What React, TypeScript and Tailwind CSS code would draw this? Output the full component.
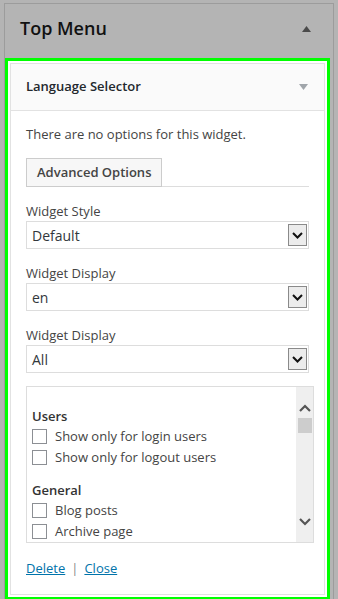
import type { ReactNode } from "react";

function SelectBox({ value }: { value: string }) {
  return (
    <div className="flex h-[28px] items-center justify-between border border-[#dddddd] bg-white pl-[5px] pr-[1px] text-[14px] text-[#32373c]">
      <span>{value}</span>
      <span className="grid h-[22px] w-[19px] place-items-center border border-[#8a8a8a] bg-[#ececec]">
        <svg width="11" height="7" viewBox="0 0 11 7">
          <path d="M1 1l4.5 4.5L10 1" fill="none" stroke="#111" strokeWidth="2" />
        </svg>
      </span>
    </div>
  );
}

function Field({ label, value }: { label: string; value: string }) {
  return (
    <div className="mt-[14px]">
      <p className="text-[13px] leading-[20px] text-[#444]">{label}</p>
      <SelectBox value={value} />
    </div>
  );
}

function Check({ children }: { children: ReactNode }) {
  return (
    <label className="flex h-[21px] items-center gap-[8px] text-[13px] text-[#444]">
      <span className="h-[15px] w-[15px] shrink-0 border border-[#8c8f94] bg-white" />
      {children}
    </label>
  );
}

function Chevron({ up }: { up?: boolean }) {
  return (
    <svg width="12" height="8" viewBox="0 0 12 8">
      <path
        d={up ? "M1 7l5-5 5 5" : "M1 1l5 5 5-5"}
        fill="none"
        stroke="#555"
        strokeWidth="2.2"
      />
    </svg>
  );
}

export default function App() {
  return (
    <div
      className="min-h-[599px] w-[338px] bg-[#b4b4b4] pt-[3px]"
      style={{ fontFamily: '"Open Sans", sans-serif' }}
    >
      <div className="ml-[4px] w-[330px] border-l border-r border-t border-[#9c9c9c]">
        <div className="flex h-[54px] items-center justify-between pb-[5px] pl-[15px] pr-[22px]">
          <h2 className="text-[18px] font-semibold text-[#111]">Top Menu</h2>
          <svg width="9" height="6" viewBox="0 0 9 6">
            <path d="M0 6L4.5 0 9 6z" fill="#4a4a4a" />
          </svg>
        </div>

        <div className="w-[325px] border-[3px] border-[#00ff00] bg-white p-[2px]">
          <div className="border border-[#e2e2e2]">
            <div className="flex h-[47px] items-center justify-between border-b border-[#e2e2e2] bg-[#fafafa] pl-[15px] pr-[16px]">
              <h3 className="text-[13px] font-semibold text-[#23282d]">Language Selector</h3>
              <svg width="9" height="6" viewBox="0 0 9 6">
                <path d="M0 0h9L4.5 6z" fill="#a0a5aa" />
              </svg>
            </div>

            <div className="px-[15px] pb-[15px] pt-[14px]">
              <p className="text-[13px] leading-[19px] text-[#444]">
                There are no options for this widget.
              </p>

              <div className="mt-[14px] flex border-b border-[#dddddd]">
                <button className="-mb-px h-[29px] border border-[#cccccc] bg-[#f7f7f7] px-[10px] text-[13px] font-semibold text-[#444]">
                  Advanced Options
                </button>
              </div>

              <Field label="Widget Style" value="Default" />
              <Field label="Widget Display" value="en" />
              <Field label="Widget Display" value="All" />

              <div className="mt-[13px] flex h-[157px] w-[288px] border border-[#dddddd] bg-white">
                <div className="flex-1 pl-[5px] pt-[19px]">
                  <p className="text-[13px] font-semibold leading-[20px] text-[#333]">Users</p>
                  <Check>Show only for login users</Check>
                  <Check>Show only for logout users</Check>
                  <p className="mt-[12px] text-[13px] font-semibold leading-[20px] text-[#333]">General</p>
                  <Check>Blog posts</Check>
                  <Check>Archive page</Check>
                </div>
                <div className="flex w-[17px] flex-col items-center bg-[#efefef] pt-[17px]">
                  <Chevron up />
                  <div className="mt-[6px] h-[15px] w-[14px] bg-[#cdcdcd]" />
                  <div className="flex-1" />
                  <div className="mb-[16px]">
                    <Chevron />
                  </div>
                </div>
              </div>

              <div className="mt-[16px] flex items-center gap-[6px] text-[13px] text-[#0073aa]">
                <a href="#" className="underline">Delete</a>
                <span className="text-[#888]">|</span>
                <a href="#" className="underline">Close</a>
              </div>
            </div>
          </div>
        </div>
      </div>
    </div>
  );
}
